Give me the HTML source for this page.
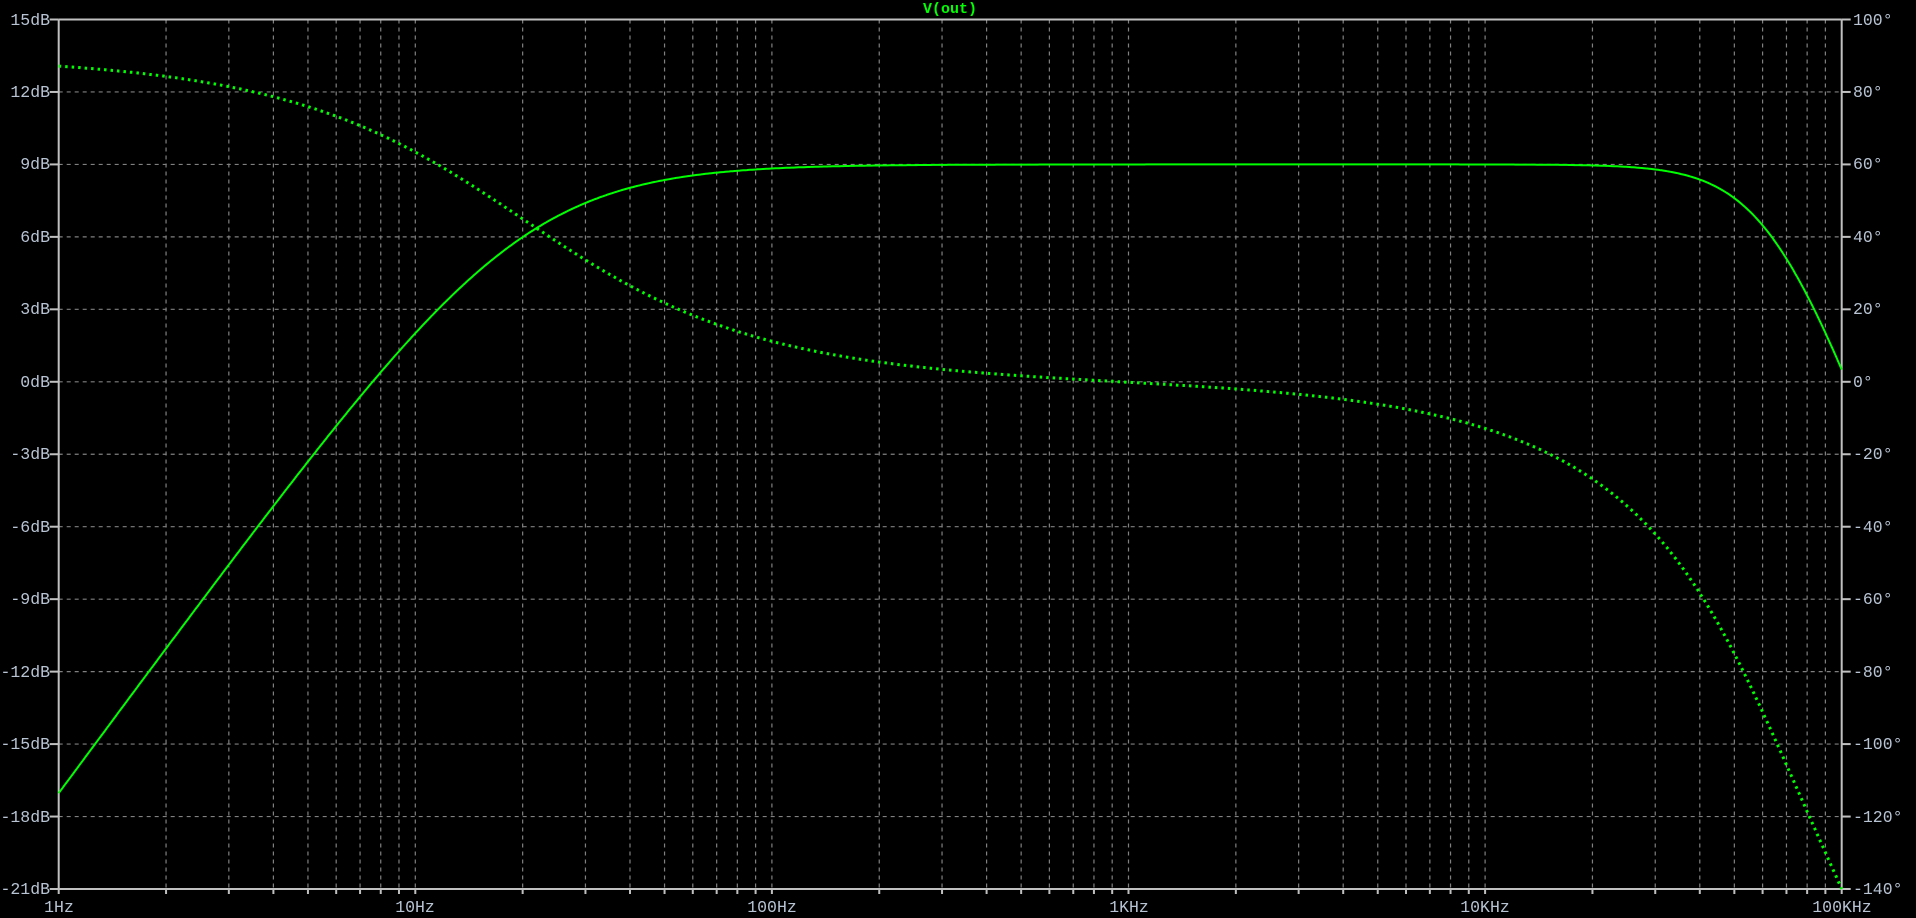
<!DOCTYPE html>
<html><head><meta charset="utf-8">
<style>
html,body{margin:0;padding:0;background:#000;width:1916px;height:918px;overflow:hidden}
svg{position:absolute;left:0;top:0}
text{font-family:"Liberation Mono",monospace;font-size:16.5px;fill:#b8c4d4}
</style></head><body>
<svg id="s" width="1916" height="918" xmlns="http://www.w3.org/2000/svg">
<g id="grid"></g>
<g id="axes"></g>
<text x="950" y="13" text-anchor="middle" style="fill:#00ff00;font-weight:bold;font-size:15px">V(out)</text>
<g text-anchor="end">
<text x="50" y="25">15dB</text>
<text x="50" y="97">12dB</text>
<text x="50" y="169">9dB</text>
<text x="50" y="242">6dB</text>
<text x="50" y="314">3dB</text>
<text x="50" y="387">0dB</text>
<text x="50" y="459">-3dB</text>
<text x="50" y="532">-6dB</text>
<text x="50" y="604">-9dB</text>
<text x="50" y="677">-12dB</text>
<text x="50" y="749">-15dB</text>
<text x="50" y="822">-18dB</text>
<text x="50" y="894">-21dB</text>
</g>
<g text-anchor="start">
<text x="1853" y="25">100°</text>
<text x="1853" y="97">80°</text>
<text x="1853" y="169">60°</text>
<text x="1853" y="242">40°</text>
<text x="1853" y="314">20°</text>
<text x="1853" y="387">0°</text>
<text x="1853" y="459">-20°</text>
<text x="1853" y="532">-40°</text>
<text x="1853" y="604">-60°</text>
<text x="1853" y="677">-80°</text>
<text x="1853" y="749">-100°</text>
<text x="1853" y="822">-120°</text>
<text x="1853" y="894">-140°</text>
</g>
<g text-anchor="middle">
<text x="59" y="912">1Hz</text>
<text x="415" y="912">10Hz</text>
<text x="772" y="912">100Hz</text>
<text x="1129" y="912">1KHz</text>
<text x="1485" y="912">10KHz</text>
<text x="1842" y="912">100KHz</text>
</g>
<path id="mag" fill="none" stroke="#00ff00" stroke-width="2"/>
<path id="ph" fill="none" stroke="#00ff00" stroke-width="3" stroke-dasharray="2.5 4"/>
</svg>
<script>
var L=58.7,R=1841.7,T=19.5,B=889,D=(R-L)/5;
function X(f){return L+Math.log10(f)*D}
function Yd(db){return T+(15-db)*(B-T)/36}
function Yp(p){return T+(100-p)*(B-T)/240}
var ns="http://www.w3.org/2000/svg",g=document.getElementById('grid'),a=document.getElementById('axes');
function line(p,x1,y1,x2,y2,st,w,da){var l=document.createElementNS(ns,'line');l.setAttribute('x1',x1);l.setAttribute('y1',y1);l.setAttribute('x2',x2);l.setAttribute('y2',y2);l.setAttribute('stroke',st);l.setAttribute('stroke-width',w);if(da)l.setAttribute('stroke-dasharray',da);p.appendChild(l)}
for(var i=1;i<12;i++){var y=T+i*(B-T)/12;line(g,L,y,R,y,'#808080',1.2,'4 4')}
for(var d=0;d<5;d++)for(var k=1;k<=9;k++){if(d==0&&k==1)continue;var x=X(k*Math.pow(10,d));line(g,x,T,x,B,'#808080',1.2,'4 4');line(a,x,B,x,B+5,'#c0c0c0',2)}
line(a,L,T,R,T,'#c0c0c0',2);line(a,L,B,R,B,'#c0c0c0',2);line(a,L,T,L,B+5,'#c0c0c0',2);line(a,R,T,R,B+5,'#c0c0c0',2);
for(var i=0;i<=12;i++){var y=T+i*(B-T)/12;line(a,L-9,y,L,y,'#c0c0c0',2);line(a,R,y,R+9,y,'#c0c0c0',2)}
var m='',p='';
for(var i=0;i<=1000;i++){var f=Math.pow(10,i*5/1000);
var r=f/20,hpM=-10*Math.log10(1+1/(r*r)),hpP=Math.atan(1/r)*180/Math.PI;
var x=f/63700,re=1-x*x,im=Math.SQRT2*x,lpM=-10*Math.log10(re*re+im*im),lpP=-Math.atan2(im,re)*180/Math.PI-16.6*Math.pow(f/1e5,2);
var db=9+hpM+lpM,ph=hpP+lpP,px=X(f).toFixed(1);
m+=(i?'L':'M')+px+','+Yd(db).toFixed(1);p+=(i?'L':'M')+px+','+Yp(ph).toFixed(1);}
document.getElementById('mag').setAttribute('d',m);document.getElementById('ph').setAttribute('d',p);
</script>
</body></html>
